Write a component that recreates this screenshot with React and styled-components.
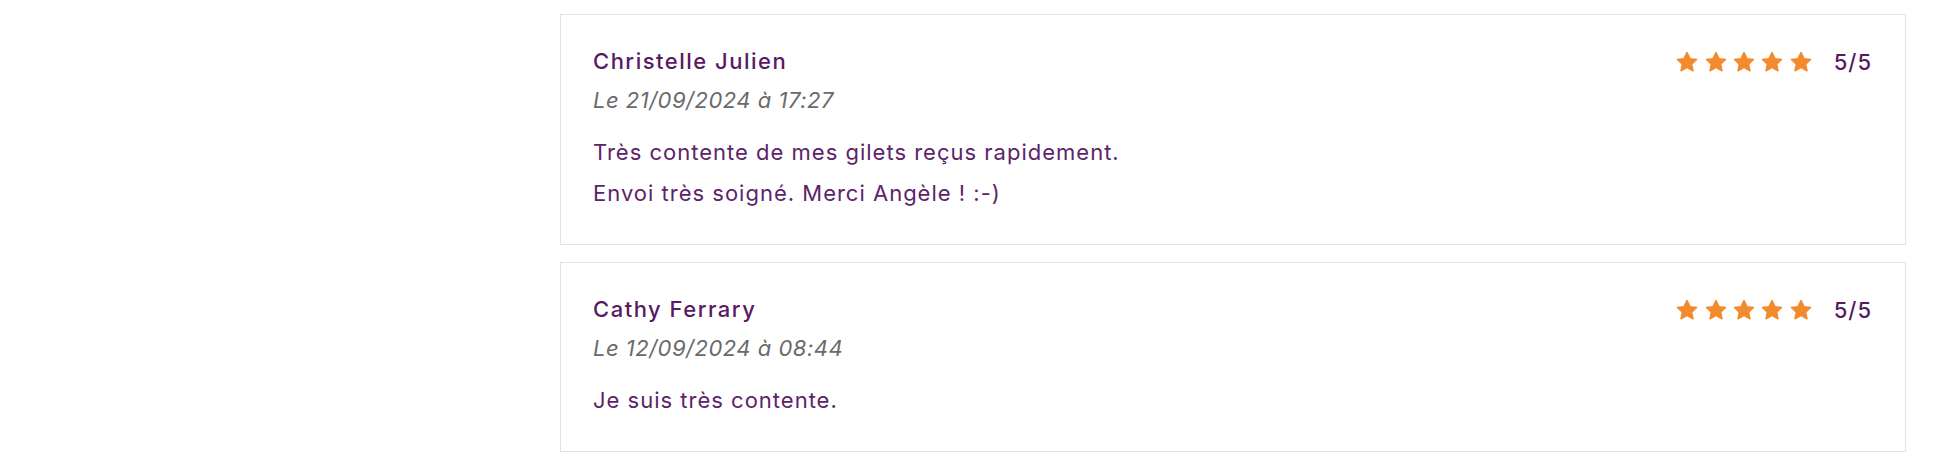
import React from 'react';
import styled, { createGlobalStyle } from 'styled-components';

const GlobalStyle = createGlobalStyle`
    body {
        margin: 0;
        background: #fff;
        font-family: Inter, "Noto Sans", Arial, sans-serif;
    }
`;

const Page = styled.div`
    padding: 14px 40px 14px 560px;
`;

const ReviewList = styled.div`
    display: flex;
    flex-direction: column;
    gap: 17px;
`;

const Card = styled.div`
    border: 1px solid #dfe4e5;
    padding: 27px 33px 30px 32px;
`;

const CardHeader = styled.div`
    display: flex;
    justify-content: space-between;
    align-items: flex-start;
`;

const Author = styled.div`
    font-size: 22px;
    line-height: 39px;
    font-weight: 500;
    letter-spacing: 1.5px;
    color: #581a63;
`;

const DateLine = styled.div`
    font-size: 22px;
    line-height: 39px;
    font-style: italic;
    letter-spacing: 0.5px;
    color: #6a6a6a;
`;

const Rating = styled.div`
    display: flex;
    align-items: center;
    height: 39px;
`;

const Stars = styled.div`
    display: flex;
    gap: 4.3px;
    margin-right: 21px;
`;

const Score = styled.span`
    font-size: 22px;
    font-weight: 500;
    letter-spacing: 1px;
    color: #581a63;
`;

const Body = styled.div`
    margin-top: 12px;
`;

const Line = styled.p`
    margin: 0;
    font-size: 22px;
    line-height: 41px;
    letter-spacing: 1px;
    color: #5c2469;
`;

const Star = () => (
    <svg width="24" height="24" viewBox="0 0 24 24">
        <path
            d="M12 2.6l2.9 6.1 6.6.8-4.9 4.6 1.3 6.6L12 17.4l-5.9 3.3 1.3-6.6-4.9-4.6 6.6-.8z"
            fill="#f28b2e"
            stroke="#f28b2e"
            strokeWidth="1.6"
            strokeLinejoin="round"
        />
    </svg>
);

const reviews = [
    {
        author: 'Christelle Julien',
        date: 'Le 21/09/2024 à 17:27',
        rating: 5,
        lines: ['Très contente de mes gilets reçus rapidement.', 'Envoi très soigné. Merci Angèle ! :-)'],
    },
    {
        author: 'Cathy Ferrary',
        date: 'Le 12/09/2024 à 08:44',
        rating: 5,
        lines: ['Je suis très contente.'],
    },
];

export default function App() {
    return (
        <Page>
            <GlobalStyle />
            <ReviewList>
                {reviews.map((review) => (
                    <Card key={review.author}>
                        <CardHeader>
                            <div>
                                <Author>{review.author}</Author>
                                <DateLine>{review.date}</DateLine>
                            </div>
                            <Rating>
                                <Stars>
                                    {Array.from({ length: review.rating }).map((_, i) => <Star key={i} />)}
                                </Stars>
                                <Score>{review.rating}/5</Score>
                            </Rating>
                        </CardHeader>
                        <Body>
                            {review.lines.map((line) => <Line key={line}>{line}</Line>)}
                        </Body>
                    </Card>
                ))}
            </ReviewList>
        </Page>
    );
}
